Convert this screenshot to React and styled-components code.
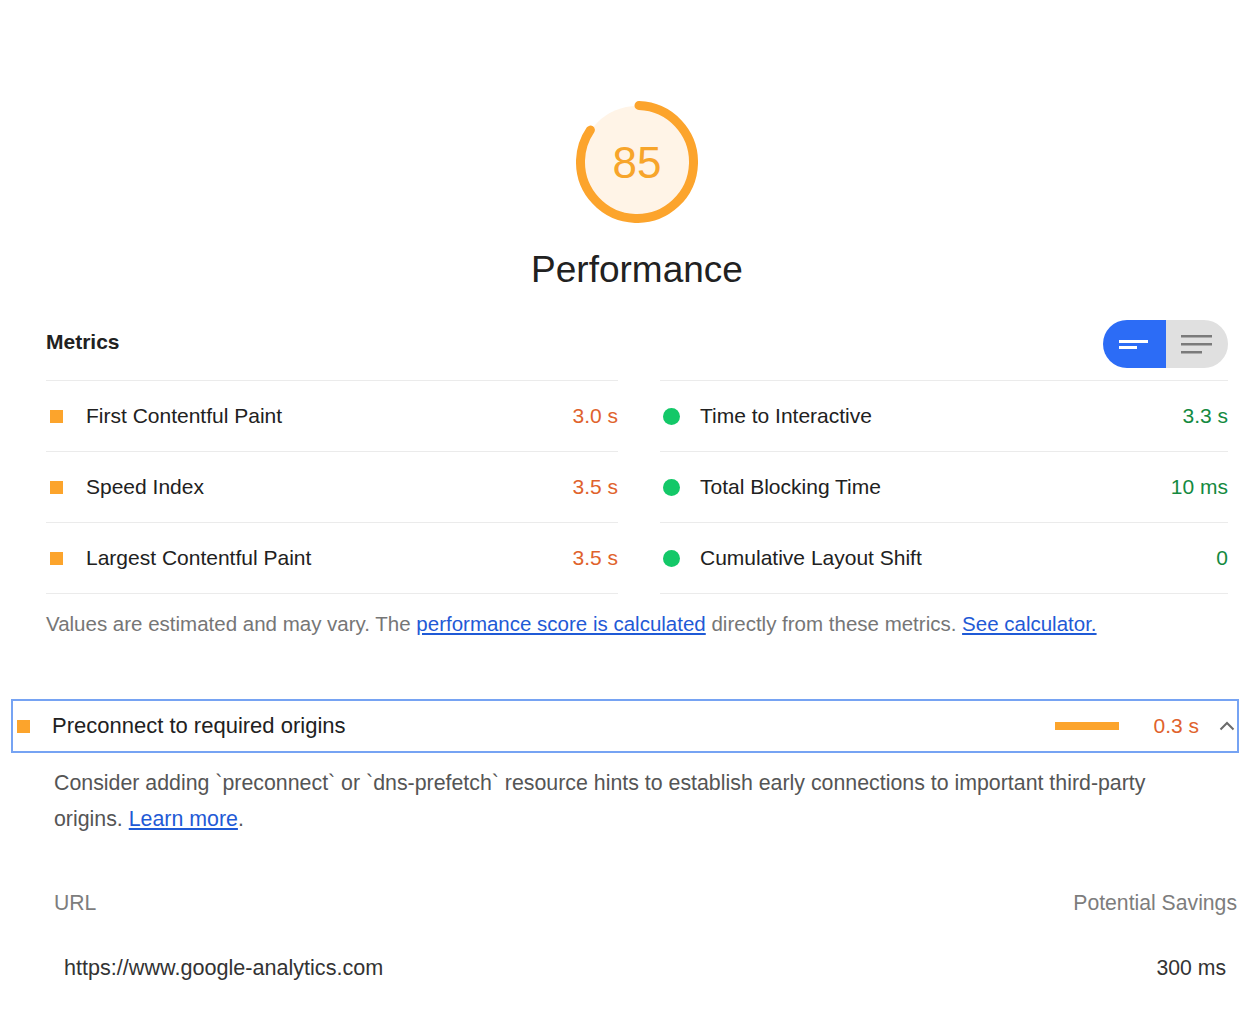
import React from 'react'
import styled, { createGlobalStyle } from 'styled-components'

const GlobalStyle = createGlobalStyle`
  body {
    margin: 0;
    background: #ffffff;
    font-family: "Liberation Sans", Arial, sans-serif;
    color: #212121;
  }
`

const Page = styled.div`
  width: 1254px;
  box-sizing: border-box;
  padding: 0 15px 40px 11px;
`

const Category = styled.section`
  padding: 0 11px 0 35px;
`

const GaugeWrap = styled.div`
  display: flex;
  flex-direction: column;
  align-items: center;
  padding-top: 101px;
`

const GaugeBox = styled.div`
  position: relative;
  width: 122px;
  height: 122px;
`

const GaugeNumber = styled.div`
  position: absolute;
  inset: 0;
  display: flex;
  align-items: center;
  justify-content: center;
  font-size: 44px;
  color: #f7a52b;
  padding-top: 1px;
`

const Title = styled.h1`
  margin: 25px 0 0;
  font-size: 37px;
  line-height: 44px;
  font-weight: 400;
  color: #212121;
`

const MetricsHead = styled.div`
  display: flex;
  align-items: center;
  justify-content: space-between;
  margin-top: 28px;
  height: 48px;
`

const MetricsLabel = styled.h2`
  margin: 0 0 4px;
  font-size: 21px;
  font-weight: 700;
  color: #212121;
`

const Toggle = styled.div`
  display: flex;
  width: 125px;
  height: 48px;
  border-radius: 24px;
  overflow: hidden;
`

const ToggleHalf = styled.div`
  flex: 1;
  display: flex;
  align-items: center;
  justify-content: center;
  background: ${p => (p.$active ? '#2c6cf6' : '#e0e0e0')};
`

const MetricsGrid = styled.div`
  display: grid;
  grid-template-columns: 572px 1fr;
  column-gap: 42px;
  margin-top: 12px;
`

const Column = styled.div`
  border-top: 1px solid #ebebeb;
`

const MetricRow = styled.div`
  display: flex;
  align-items: center;
  height: 70px;
  border-bottom: 1px solid #ebebeb;
  font-size: 21px;
`

const Marker = styled.span`
  flex: none;
  width: ${p => (p.$round ? '17px' : '13px')};
  height: ${p => (p.$round ? '17px' : '13px')};
  margin-left: ${p => (p.$round ? '3px' : '4px')};
  margin-right: ${p => (p.$round ? '20px' : '23px')};
  border-radius: ${p => (p.$round ? '50%' : '0')};
  background: ${p => (p.$round ? '#13c868' : '#fca42c')};
`

const MetricName = styled.span`
  flex: 1;
  color: #212121;
`

const MetricValue = styled.span`
  color: ${p => (p.$pass ? '#148a3f' : '#e0622c')};
`

const Note = styled.p`
  margin: 18px 0 0;
  font-size: 20.5px;
  line-height: 24px;
  color: #767676;
`

const Link = styled.a`
  color: #1f5ad6;
  text-decoration: underline;
`

const Audit = styled.section`
  margin-top: 63px;
`

const AuditHead = styled.div`
  display: flex;
  align-items: center;
  height: 50px;
  border: 2px solid #76a3f3;
  padding: 0 2px 0 0;
  font-size: 21px;
`

const AuditTitle = styled.span`
  flex: 1;
  margin-left: -1px;
  font-size: 22px;
  color: #212121;
`

const Bar = styled.span`
  width: 64px;
  height: 8px;
  background: #fca42c;
  margin-right: 34px;
`

const AuditValue = styled.span`
  color: #e0622c;
  margin-right: 20px;
`

const Description = styled.p`
  margin: 12px 0 0 43px;
  max-width: 1110px;
  font-size: 21.35px;
  line-height: 36px;
  color: #555555;
`

const Table = styled.div`
  margin: 47px 0 0 43px;
`

const TableRow = styled.div`
  display: flex;
  justify-content: space-between;
  align-items: center;
  height: ${p => (p.$head ? '38px' : '40px')};
  margin-top: ${p => (p.$head ? '0' : '26px')};
  padding: ${p => (p.$head ? '0 2px 0 0' : '0 13px 0 10px')};
  font-size: 21.2px;
  color: ${p => (p.$head ? '#7d7d7d' : '#333333')};
`

const UrlText = styled.span`
  font-size: 21.6px;
`

const Gauge = ({ score }) => {
  const r = 56.5
  const c = 2 * Math.PI * r
  return (
    <GaugeBox>
      <svg width="122" height="122" viewBox="0 0 122 122">
        <circle cx="61" cy="61" r="56" fill="#fff4e7" />
        <circle
          cx="61"
          cy="61"
          r={r}
          fill="none"
          stroke="#fca42c"
          strokeWidth="9"
          strokeLinecap="round"
          strokeDasharray={`${(c * score) / 100 - 4} ${c}`}
          transform="rotate(-88 61 61)"
        />
      </svg>
      <GaugeNumber>{score}</GaugeNumber>
    </GaugeBox>
  )
}

const metrics = [
  [
    ['First Contentful Paint', '3.0 s'],
    ['Speed Index', '3.5 s'],
    ['Largest Contentful Paint', '3.5 s'],
  ],
  [
    ['Time to Interactive', '3.3 s'],
    ['Total Blocking Time', '10 ms'],
    ['Cumulative Layout Shift', '0'],
  ],
]

export default function App() {
  return (
    <Page>
      <GlobalStyle />
      <Category>
        <GaugeWrap>
          <Gauge score={85} />
          <Title>Performance</Title>
        </GaugeWrap>
        <MetricsHead>
          <MetricsLabel>Metrics</MetricsLabel>
          <Toggle>
            <ToggleHalf $active>
              <svg width="30" height="14" viewBox="0 0 30 14">
                <rect x="0" y="3" width="29" height="3" fill="#fff" />
                <rect x="0" y="9" width="18" height="3" fill="#fff" />
              </svg>
            </ToggleHalf>
            <ToggleHalf>
              <svg width="32" height="22" viewBox="0 0 32 22">
                <rect x="0" y="2" width="31" height="2.5" fill="#7a7a7a" />
                <rect x="0" y="10" width="31" height="2.5" fill="#7a7a7a" />
                <rect x="0" y="18" width="21" height="2.5" fill="#7a7a7a" />
              </svg>
            </ToggleHalf>
          </Toggle>
        </MetricsHead>
        <MetricsGrid>
          {metrics.map((col, ci) => (
            <Column key={ci}>
              {col.map(([name, value]) => (
                <MetricRow key={name}>
                  <Marker $round={ci === 1} />
                  <MetricName>{name}</MetricName>
                  <MetricValue $pass={ci === 1}>{value}</MetricValue>
                </MetricRow>
              ))}
            </Column>
          ))}
        </MetricsGrid>
        <Note>
          Values are estimated and may vary. The{' '}
          <Link href="#">performance score is calculated</Link> directly from these metrics.{' '}
          <Link href="#">See calculator.</Link>
        </Note>
      </Category>
      <Audit>
        <AuditHead>
          <Marker />
          <AuditTitle>Preconnect to required origins</AuditTitle>
          <Bar />
          <AuditValue>0.3 s</AuditValue>
          <svg width="16" height="10" viewBox="0 0 16 10">
            <path d="M1.5 8.5 L8 2 L14.5 8.5" fill="none" stroke="#6b6b6b" strokeWidth="2" />
          </svg>
        </AuditHead>
        <Description>
          Consider adding `preconnect` or `dns-prefetch` resource hints to establish early connections to important
          third-party origins. <Link href="#">Learn more</Link>.
        </Description>
        <Table>
          <TableRow $head>
            <span>URL</span>
            <span>Potential Savings</span>
          </TableRow>
          <TableRow>
            <UrlText>https://www.google-analytics.com</UrlText>
            <span>300 ms</span>
          </TableRow>
        </Table>
      </Audit>
    </Page>
  )
}
